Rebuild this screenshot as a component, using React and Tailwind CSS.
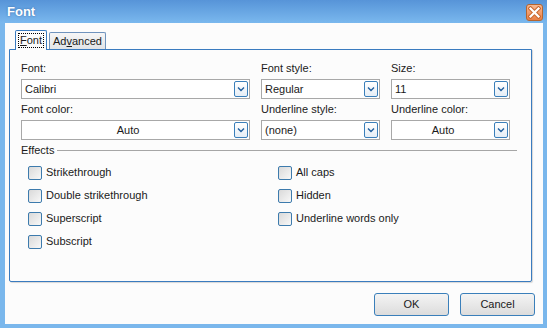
import React from "react";

function Chevron() {
  return (
    <svg width="8" height="6" viewBox="0 0 8 6">
      <path d="M1 1.5 L4 4.5 L7 1.5" fill="none" stroke="#1f5f9e" strokeWidth="1.4" />
    </svg>
  );
}

function Dropdown({ value, center }) {
  return (
    <div className="flex items-center h-[20px] border border-[#a8a8a8] bg-white">
      <div className={"flex-1 px-[3px] leading-[18px] " + (center ? "text-center" : "")}>{value}</div>
      <div className="flex items-center justify-center w-[14px] h-[16px] mr-[1px] rounded-[2px] border border-[#3a7fba] bg-gradient-to-b from-[#ffffff] to-[#e6eef6]">
        <Chevron />
      </div>
    </div>
  );
}

function Check({ label }) {
  return (
    <div className="flex items-center h-[23px] gap-[4px]">
      <div className="w-[14px] h-[14px] rounded-[2px] border border-[#3d7bad] bg-gradient-to-br from-[#d9d9d9] to-[#f8f8f8]" />
      <span>{label}</span>
    </div>
  );
}

export default function App() {
  return (
    <div className="w-[547px] h-[328px] flex flex-col bg-[#7ab7ec] text-[11px] text-[#1a1a1a] font-['Liberation_Sans',Arial,sans-serif] overflow-hidden">
      {/* Title bar */}
      <div className="h-[23px] flex items-center justify-between bg-gradient-to-b from-[#5794d8] to-[#7ab8ee] pl-[7px] pr-[4px]">
        <span className="text-white font-bold text-[13px] [text-shadow:0_0_2px_rgba(30,70,130,0.6)]">Font</span>
        <div className="w-[17px] h-[17px] mt-[2px] rounded-[3px] border border-[#b5652f] bg-gradient-to-b from-[#f8b88f] to-[#e97f45] flex items-center justify-center">
          <svg width="13" height="13" viewBox="0 0 13 13">
            <path d="M2.5 2.5 L10.5 10.5 M10.5 2.5 L2.5 10.5" stroke="#c8672f" strokeWidth="4.2" strokeLinecap="square" />
            <path d="M2.5 2.5 L10.5 10.5 M10.5 2.5 L2.5 10.5" stroke="#ffffff" strokeWidth="2.2" strokeLinecap="square" />
          </svg>
        </div>
      </div>
      {/* Client area */}
      <div className="flex-1 ml-[5px] mr-[4px] mb-[4px] bg-[#fcfcfc] flex flex-col">
        {/* Tabs */}
        <div className="h-[26px] flex items-end pl-[10px]">
          <div className="relative z-10 -mb-px h-[20px] w-[32px] flex items-center justify-center bg-[#fcfcfc] border border-b-0 border-[#3a7bbf] rounded-t-[2px]">
            <span className="border border-dotted border-black px-[1px] leading-[13px]">
              <span className="underline">F</span>ont
            </span>
          </div>
          <div className="ml-[2px] h-[17px] w-[57px] flex items-center justify-center bg-gradient-to-b from-[#f6f6f6] to-[#e2e4e7] border border-b-0 border-[#6f93bd] rounded-t-[2px]">
            <span className="leading-[13px]">
              Ad<span className="underline">v</span>anced
            </span>
          </div>
        </div>
        {/* Panel */}
        <div className="ml-[4px] mr-[11px] h-[233px] border border-[#3a7bbf] rounded-b-[2px] bg-[#fcfcfc] pl-[11px] pr-[14px] pt-[12px] shadow-[1px_1px_1px_rgba(0,0,0,0.15)]">
          <div className="grid grid-cols-[229px_119px_119px] gap-x-[11px]">
            <div className="flex flex-col gap-[4px]">
              <div className="h-[13px] leading-[13px]">Font:</div>
              <Dropdown value="Calibri" />
              <div className="h-[13px] leading-[13px]">Font color:</div>
              <Dropdown value="Auto" center />
            </div>
            <div className="flex flex-col gap-[4px]">
              <div className="h-[13px] leading-[13px]">Font style:</div>
              <Dropdown value="Regular" />
              <div className="h-[13px] leading-[13px]">Underline style:</div>
              <Dropdown value="(none)" />
            </div>
            <div className="flex flex-col gap-[4px]">
              <div className="h-[13px] leading-[13px]">Size:</div>
              <Dropdown value="11" />
              <div className="h-[13px] leading-[13px]">Underline color:</div>
              <Dropdown value="Auto" center />
            </div>
          </div>
          <div className="mt-[4px] flex items-center gap-[3px] h-[13px]">
            <span className="leading-[13px]">Effects</span>
            <div className="flex-1 h-px bg-[#a6a6a6]" />
          </div>
          <div className="mt-[4px] pl-[7px] grid grid-cols-[250px_1fr]">
            <div className="flex flex-col">
              <Check label="Strikethrough" />
              <Check label="Double strikethrough" />
              <Check label="Superscript" />
              <Check label="Subscript" />
            </div>
            <div className="flex flex-col">
              <Check label="All caps" />
              <Check label="Hidden" />
              <Check label="Underline words only" />
            </div>
          </div>
        </div>
        {/* Buttons */}
        <div className="flex justify-end gap-[11px] mt-[11px] pr-[8px]">
          <button className="w-[75px] h-[23px] border border-[#3a7fba] rounded-[3px] bg-gradient-to-b from-[#f4f4f4] to-[#dcdcdc] text-[11px]">OK</button>
          <button className="w-[75px] h-[23px] border border-[#3a7fba] rounded-[3px] bg-gradient-to-b from-[#f4f4f4] to-[#dcdcdc] text-[11px]">Cancel</button>
        </div>
      </div>
    </div>
  );
}
